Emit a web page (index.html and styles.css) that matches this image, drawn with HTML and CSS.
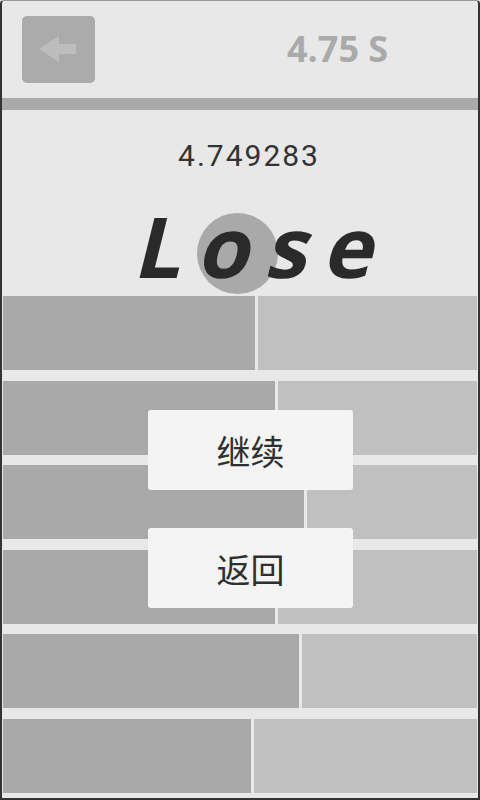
FILE: index.html
```html
<!DOCTYPE html>
<html>
<head>
<meta charset="utf-8">
<link rel="stylesheet" href="styles.css">
</head>
<body>
<div class="frame">
  <header class="top">
    <div class="back">
      <svg width="38" height="26" viewBox="0 0 38 26"><path d="M0 13 L20 0 L20 8 L37 8 L37 18 L20 18 L20 26 Z" fill="#bdbdbd"/></svg>
    </div>
    <div class="timer">4.75 S</div>
  </header>
  <div class="rule"></div>
  <section class="result">
    <div class="score">4.749283</div>
    <div class="lose-wrap">
      <div class="ball"></div>
      <div class="lose">Lose</div>
    </div>
  </section>
  <section class="rows">
    <div class="row"><div class="dark w1"></div><div class="light"></div></div>
    <div class="row"><div class="dark w2"></div><div class="light"></div></div>
    <div class="row"><div class="dark w3"></div><div class="light"></div></div>
    <div class="row"><div class="dark w4"></div><div class="light"></div></div>
    <div class="row"><div class="dark w5"></div><div class="light"></div></div>
    <div class="row"><div class="dark w6"></div><div class="light"></div></div>
    <div class="menu">
      <div class="btn">继续</div>
      <div class="btn">返回</div>
    </div>
  </section>
</div>
</body>
</html>
```
FILE: styles.css
```css
html, body { margin: 0; padding: 0; }
body { width: 480px; height: 800px; overflow: hidden; background: #e8e8e8; }
.frame {
  box-sizing: border-box;
  width: 480px; height: 800px;
  background: #e8e8e8;
  border-top: 1px solid #9a9a9a;
  border-left: 2px solid #333;
  border-right: 2px solid #333;
  border-bottom: 2px solid #333;
  border-radius: 4px 4px 0 0;
  display: flex; flex-direction: column;
}
.top {
  height: 97px;
  display: flex; align-items: center;
  padding-left: 20px;
}
.back {
  width: 73px; height: 67px;
  background: #ababab;
  border-radius: 5px;
  display: flex; align-items: center; justify-content: center;
  margin-top: -1px;
}
.back svg { margin-left: -2px; }
.timer {
  margin-left: 192px;
  margin-top: -2px;
  font-family: "Open Sans", "DejaVu Sans", sans-serif;
  font-weight: 700;
  font-size: 36px;
  color: #aaaaaa;
}
.rule { height: 12px; background: #aaaaaa; }
.result {
  height: 186px;
  display: flex; flex-direction: column; align-items: center;
}
.score {
  margin-top: 26px;
  padding-left: 18px;
  font-family: Roboto, "Noto Sans", sans-serif;
  font-size: 30px;
  letter-spacing: 2px;
  color: #333;
  line-height: 40px;
}
.lose-wrap { position: relative; margin-top: 20px; height: 100px; width: 100%; }
.ball {
  position: absolute;
  left: 195px; top: 17px;
  width: 81px; height: 81px;
  border-radius: 50%;
  background: #a9a9a9;
}
.lose {
  position: relative;
  text-align: center;
  padding-left: 40px;
  font-family: "Open Sans", "DejaVu Sans", sans-serif;
  font-weight: 700;
  font-size: 84px;
  letter-spacing: 16px;
  color: #2a2a2a;
  line-height: 100px;
  transform: skewX(-14deg);
  transform-origin: 50% 80%;
}
.rows {
  position: relative;
  flex: 1;
  padding: 0 1px;
  display: flex; flex-direction: column; gap: 10.6px;
}
.row { height: 74px; display: flex; gap: 3px; }
.dark { background: #a9a9a9; }
.light { background: #c0c0c0; flex: 1; }
.w1 { width: 252px; }
.w2 { width: 272px; }
.w3 { width: 301px; }
.w4 { width: 272px; }
.w5 { width: 296px; }
.w6 { width: 248px; }
.menu {
  position: absolute;
  left: 146px; top: 114px;
  display: flex; flex-direction: column; gap: 38px;
}
.btn {
  width: 205px; height: 80px;
  background: #f4f4f4;
  border-radius: 3px;
  display: flex; align-items: center; justify-content: center;
  font-family: "Noto Sans CJK SC", sans-serif;
  font-size: 34px;
  color: #2f2f2f;
}
```
